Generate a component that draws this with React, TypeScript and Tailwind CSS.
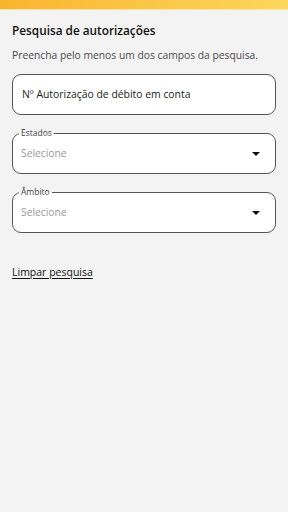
export default function App() {
  return (
    <div className="min-h-[512px] w-full bg-[#f3f3f3] font-['Open_Sans',_'Noto_Sans',_sans-serif] text-[#1d1d1d]">
      <div className="h-[9px] w-full bg-gradient-to-r from-[#f8b52b] to-[#fed65c]" />
      <div className="h-px w-full bg-[#fbe3a6]" />

      <div className="px-3">
        <h1 className="mt-[11px] text-[11.8px] font-semibold leading-[18px] text-[#111]">Pesquisa de autorizações</h1>
        <p className="mt-[8px] text-[10.3px] leading-[16px] text-[#4a4a4a]">
          Preencha pelo menos um dos campos da pesquisa.
        </p>

        <div className="mt-[11px] flex h-[41px] items-center rounded-[9px] border border-[#555] bg-white px-[9px]">
          <span className="text-[10.4px] font-medium text-[#222]">Nº Autorização de débito em conta</span>
        </div>

        {/* Estados */}
        <fieldset className="mt-[14px] h-[45px] rounded-[9px] border border-[#555] bg-white px-[6px]">
          <legend className="px-[2px] text-[8.5px] leading-[8px] text-[#444]">Estados</legend>
          <div className="flex h-[34px] items-center justify-between pl-[2px] pr-[9px]">
            <span className="text-[10.3px] text-[#9a9a9a]">Selecione</span>
            <Caret />
          </div>
        </fieldset>

        {/* Ambito */}
        <fieldset className="mt-[14px] h-[45px] rounded-[9px] border border-[#555] bg-white px-[6px]">
          <legend className="px-[2px] text-[8.5px] leading-[8px] text-[#444]">Âmbito</legend>
          <div className="flex h-[34px] items-center justify-between pl-[2px] pr-[9px]">
            <span className="text-[10.3px] text-[#9a9a9a]">Selecione</span>
            <Caret />
          </div>
        </fieldset>

        <button className="mt-[32px] text-[10.5px] font-medium text-[#111] underline underline-offset-2">
          Limpar pesquisa
        </button>
      </div>
    </div>
  )
}

function Caret() {
  return (
    <svg width="8" height="4" viewBox="0 0 10 5">
      <path d="M0 0 L10 0 L5 5 Z" fill="#111" />
    </svg>
  )
}
